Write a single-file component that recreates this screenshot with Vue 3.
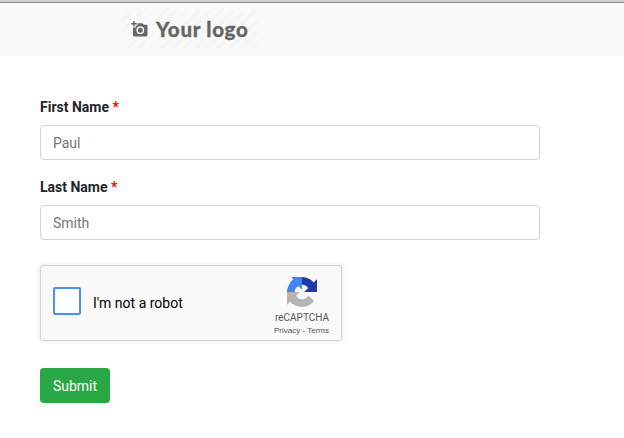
<script setup>
import { ref } from 'vue'

const fields = ref([
  { id: 'first', label: 'First Name', placeholder: 'Paul', value: '' },
  { id: 'last', label: 'Last Name', placeholder: 'Smith', value: '' },
])
</script>

<template>
  <div class="page">
    <header class="header">
      <div class="logo">
        <svg class="camera" viewBox="0 0 17 16" width="17" height="16">
          <path d="M2.2 0h1.5v2h2v1.5h-2v2H2.2v-2h-2V2h2z" fill="#666" />
          <path fill="#666" fill-rule="evenodd" d="M6.5 2.2h5l1.3 1.5h2.4c.8 0 1.3.5 1.3 1.3v9.1c0 .8-.5 1.3-1.3 1.3H3.3c-.8 0-1.3-.5-1.3-1.3V6.6h2.8V4.5h1.7zM9.3 5.3a3.9 3.9 0 1 0 0 7.8 3.9 3.9 0 0 0 0-7.8zm0 1.4a2.5 2.5 0 1 1 0 5 2.5 2.5 0 0 1 0-5z" />
        </svg>
        <span class="logo-text">Your logo</span>
      </div>
    </header>
    <form class="form" @submit.prevent>
      <div v-for="field in fields" :key="field.id" class="field">
        <label :for="field.id">{{ field.label }} <span class="required">*</span></label>
        <input :id="field.id" v-model="field.value" type="text" :placeholder="field.placeholder" />
      </div>
      <div class="captcha">
        <span class="checkbox"></span>
        <span class="captcha-label">I'm not a robot</span>
        <div class="brand">
          <svg viewBox="0 0 64 64" width="30" height="30">
            <path d="M64 31.955l-.033-1.37V4.687l-7.16 7.16C50.948 4.674 42.033.093 32.05.093c-10.4 0-19.622 4.96-25.458 12.64l11.736 11.86a15.55 15.55 0 0 1 4.754-5.334c2.05-1.6 4.952-2.906 8.968-2.906.485 0 .86.057 1.135.163 4.976.393 9.288 3.14 11.828 7.124l-8.307 8.307L64 31.953" fill="#1c3aa9" />
            <path d="M31.862.094l-1.37.033H8.594l5.16 5.16C4.58 13.147 0 22.06 0 32.046c0 10.4 4.96 19.622 12.64 25.458L24.5 45.768a15.55 15.55 0 0 1-5.334-4.754c-1.6-2.05-2.906-4.952-2.906-8.968 0-.485.057-.86.163-1.135.393-4.976 3.14-9.288 7.124-11.828l8.307 8.307L31.86.095" fill="#4285f4" />
            <path d="M.001 32.045l.033 1.37v25.898l7.16-7.16c5.86 7.173 14.774 11.754 24.76 11.754 10.4 0 19.622-4.96 25.458-12.64l-11.736-11.86a15.55 15.55 0 0 1-4.754 5.334c-2.05 1.6-4.952 2.906-8.968 2.906-.485 0-.86-.057-1.135-.163-4.976-.393-9.288-3.14-11.828-7.124l8.307-8.307c-10.522.04-22.4.066-27.295-.005" fill="#b5b5b5" />
          </svg>
          <span class="brand-name">reCAPTCHA</span>
          <span class="brand-links">Privacy - Terms</span>
        </div>
      </div>
      <button type="submit">Submit</button>
    </form>
  </div>
</template>

<style>
body {
  background: #fff;
}
</style>

<style scoped>
.page {
  height: 438px;
  overflow: hidden;
  box-sizing: border-box;
  border-top: 2px solid #d0d0d0;
  font-family: Roboto, sans-serif;
  font-size: 14px;
  color: #212529;
}
.header {
  box-sizing: border-box;
  height: 54px;
  padding: 8px 0 0 121px;
  border-top: 1px solid #858585;
  background: #f9f9f9;
}
.logo {
  display: flex;
  box-sizing: border-box;
  width: 138px;
  height: 37px;
  padding: 10px 0 0 10px;
  background: repeating-linear-gradient(135deg, #f9f9f9 0 6px, #f5f5f5 6px 8px);
}
.camera {
  flex: none;
  margin-right: 8px;
}
.logo-text {
  font: 900 20.5px/24px Lato, sans-serif;
  letter-spacing: 0.7px;
  color: #666;
  -webkit-text-stroke: 0.3px #666;
  margin-top: -4px;
  white-space: nowrap;
}
.form {
  padding: 41px 40px 0;
}
.field {
  display: flex;
  flex-direction: column;
  width: 500px;
  margin-bottom: 17px;
}
label {
  font-weight: 700;
  line-height: 20px;
  margin-bottom: 8px;
}
.required {
  color: #f00;
}
input {
  box-sizing: border-box;
  height: 35px;
  padding: 6px 12px;
  border: 1px solid #ced4da;
  border-radius: 4px;
  font: 14px/21px Roboto, sans-serif;
  color: #495057;
  background: #fff;
}
input::placeholder {
  color: #757575;
}
.captcha {
  display: flex;
  align-items: center;
  box-sizing: border-box;
  width: 302px;
  height: 76px;
  margin-top: 25px;
  padding-left: 12px;
  border: 1px solid #d3d3d3;
  border-radius: 3px;
  background: #f9f9f9;
  box-shadow: 0 0 4px 1px rgba(0, 0, 0, 0.08);
  color: #000;
}
.checkbox {
  box-sizing: border-box;
  width: 28px;
  height: 28px;
  margin: -4px 12px 0 0;
  border: 2px solid #4a90f5;
  border-radius: 2px;
  background: #fff;
}
.captcha-label {
  line-height: 17px;
}
.brand {
  display: flex;
  flex-direction: column;
  align-items: center;
  align-self: flex-start;
  width: 70px;
  margin: 11px 4px 0 auto;
  color: #555;
}
.brand-name {
  margin-top: 5px;
  font-size: 10px;
  line-height: 12px;
}
.brand-links {
  margin-top: 2px;
  margin-right: 1px;
  font: 8px/10px "Liberation Sans", sans-serif;
  white-space: nowrap;
}
button {
  display: block;
  width: 70px;
  height: 35px;
  margin-top: 27px;
  padding: 1px 0 0;
  border: 0;
  border-radius: 4px;
  background: #28a745;
  color: #fff;
  font: 14px/21px Roboto, sans-serif;
}
</style>
